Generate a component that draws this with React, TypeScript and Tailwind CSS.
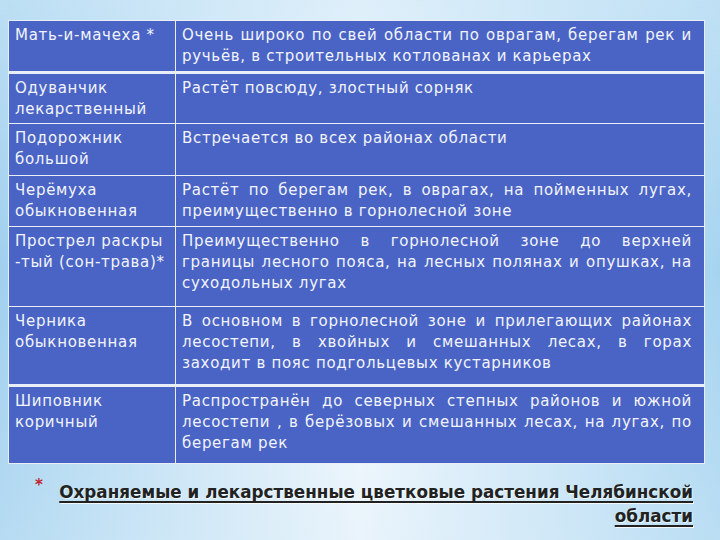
const rows = [
  {
    name: "Мать-и-мачеха *",
    lines: ["Очень широко по свей области по оврагам, берегам рек и", "ручьёв, в строительных котлованах и карьерах"],
    h: "h-[52px]",
    thick: true,
  },
  { name: "Одуванчик лекарственный", lines: ["Растёт повсюду, злостный сорняк"], h: "h-[51px]" },
  { name: "Подорожник большой", lines: ["Встречается во всех районах области"], h: "h-[52px]" },
  {
    name: "Черёмуха обыкновенная",
    lines: ["Растёт по берегам рек, в оврагах, на пойменных лугах,", "преимущественно в горнолесной зоне"],
    h: "h-[51px]",
  },
  {
    name: "Прострел раскры -тый (сон-трава)*",
    lines: [
      "Преимущественно в горнолесной зоне до верхней",
      "границы лесного пояса, на лесных полянах и опушках, на",
      "суходольных лугах",
    ],
    h: "h-[80px]",
  },
  {
    name: "Черника обыкновенная",
    lines: [
      "В основном в горнолесной зоне и прилегающих районах",
      "лесостепи, в хвойных и смешанных лесах, в горах",
      "заходит в пояс подгольцевых кустарников",
    ],
    h: "h-[79px]",
    thick: true,
  },
  {
    name: "Шиповник коричный",
    lines: [
      "Распространён до северных степных районов и южной",
      "лесостепи , в берёзовых и смешанных лесах, на лугах, по",
      "берегам рек",
    ],
    h: "h-[78px]",
  },
];

export default function App() {
  return (
    <div className="relative h-[540px] w-[720px] overflow-hidden bg-gradient-to-r from-[#9fd0ee] via-[#f4f9fd] to-[#a6d4f0] font-['DejaVu_Sans',sans-serif]">
      <div className="pointer-events-none absolute inset-0 bg-gradient-to-b from-[#cfe8f7]/60 via-transparent to-[#d8ecf8]/40" />

      <div className="relative flex flex-col pl-[8px] pt-[20px]">
        {/* Table */}
        <table className="w-[697px] border-collapse text-[15px] leading-[21px] tracking-[0.7px] text-[#f2f4fa]">
          <tbody>
            {rows.map((r) => (
              <tr
                key={r.name}
                className={`${r.h} ${r.thick ? "border-b-[3px]" : "border-b"} border-[#e8eef8] bg-[#4a64c6]`}
              >
                <td className="w-[167px] border border-[#e8eef8] pl-[6px] pr-[2px] pt-[4px] align-top">
                  {r.name}
                </td>
                <td className="border border-[#e8eef8] pl-[6px] pr-[12px] pt-[4px] align-top">
                  {r.lines.map((line, i) => (
                    <div
                      key={i}
                      className={
                        i < r.lines.length - 1
                          ? "whitespace-nowrap text-justify [text-align-last:justify]"
                          : "whitespace-nowrap"
                      }
                    >
                      {line}
                    </div>
                  ))}
                </td>
              </tr>
            ))}
          </tbody>
        </table>

        {/* Title */}
        <div className="mt-[16px] flex w-[697px]">
          <span className="ml-[27px] mt-[-2px] w-[23px] text-[15px] font-bold leading-none text-[#c0272d]">*</span>
          <p className="flex-1 pr-[12px] text-right text-[16.8px] font-bold leading-[24px] text-[#222] underline decoration-[1.5px] underline-offset-[3px] [text-shadow:1px_1px_1px_rgba(255,255,255,0.8)]">
            Охраняемые и лекарственные цветковые растения Челябинской области
          </p>
        </div>
      </div>
    </div>
  );
}
